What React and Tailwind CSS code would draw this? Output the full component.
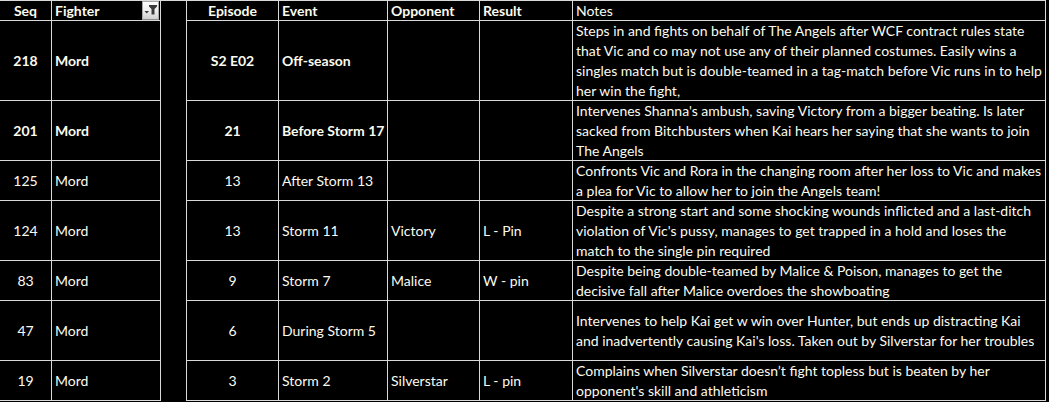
import React from 'react'

const rows = [
  {
    seq: '218', fighter: 'Mord', episode: 'S2 E02', event: 'Off-season', opponent: '', result: '', bold: true, h: 'h-[80px]',
    notes: [
      'Steps in and fights on behalf of The Angels after WCF contract rules state',
      'that Vic and co may not use any of their planned costumes. Easily wins a',
      'singles match but is double-teamed in a tag-match before Vic runs in to help',
      'her win the fight,',
    ],
  },
  {
    seq: '201', fighter: 'Mord', episode: '21', event: 'Before Storm 17', opponent: '', result: '', bold: true, h: 'h-[60px]',
    notes: [
      "Intervenes Shanna's ambush, saving Victory from a bigger beating. Is later",
      'sacked from Bitchbusters when Kai hears her saying that she wants to join',
      'The Angels',
    ],
  },
  {
    seq: '125', fighter: 'Mord', episode: '13', event: 'After Storm 13', opponent: '', result: '', h: 'h-[40px]',
    notes: [
      'Confronts Vic and Rora in the changing room after her loss to Vic and makes',
      'a plea for Vic to allow her to join the Angels team!',
    ],
  },
  {
    seq: '124', fighter: 'Mord', episode: '13', event: 'Storm 11', opponent: 'Victory', result: 'L - Pin', h: 'h-[60px]',
    notes: [
      'Despite a strong start and some shocking wounds inflicted and a last-ditch',
      "violation of Vic's pussy, manages to get trapped in a hold and loses the",
      'match to the single pin required',
    ],
  },
  {
    seq: '83', fighter: 'Mord', episode: '9', event: 'Storm 7', opponent: 'Malice', result: 'W - pin', h: 'h-[40px]',
    notes: [
      'Despite being double-teamed by Malice & Poison, manages to get the',
      'decisive fall after Malice overdoes the showboating',
    ],
  },
  {
    seq: '47', fighter: 'Mord', episode: '6', event: 'During Storm 5', opponent: '', result: '', h: 'h-[60px]',
    notes: [
      'Intervenes to help Kai get w win over Hunter, but ends up distracting Kai',
      "and inadvertently causing Kai's loss. Taken out by Silverstar for her troubles",
    ],
  },
  {
    seq: '19', fighter: 'Mord', episode: '3', event: 'Storm 2', opponent: 'Silverstar', result: 'L - pin', h: 'h-[40px]',
    notes: [
      'Complains when Silverstar doesn\u2019t fight topless but is beaten by her',
      "opponent's skill and athleticism",
    ],
  },
]

const cell = 'flex items-center border-r border-b border-[#d9d9d9] whitespace-nowrap'

// excel-style autofilter button
function FilterButton() {
  return (
    <div className="absolute right-[1px] top-0 h-[19px] w-[17px] border border-[#a8a8a8] border-b-[#8c8c8c] bg-gradient-to-b from-[#fdfdfd] via-[#eeeeee] to-[#cfcfcf]">
      <svg width="15" height="17" viewBox="0 0 15 17">
        <path d="M6 3h8v1.5l-2.5 2.5v5.5h-3v-5.5L6 4.5z" fill="#3a3a3a" />
        <path d="M1.5 9h4.5l-2.25 2.5z" fill="#3a3a3a" />
      </svg>
    </div>
  )
}

export default function App() {
  return (
    <div
      className="w-[1049px] h-[402px] bg-black text-[#fbfbef] text-[14px] leading-[20px] overflow-hidden"
      style={{ fontFamily: 'Lato, "Open Sans", sans-serif' }}
    >
      <div className="w-[1046px] border-t border-[#d9d9d9]">
        {/* Header */}
        <div className="flex h-[20px] font-bold">
          <div className={`${cell} w-[52px] justify-center`}>Seq</div>
          <div className={`${cell} w-[109px] pl-[3px] relative`}>
            Fighter
            <FilterButton />
          </div>
          <div className="w-[26px] border-r border-[#d9d9d9]" />
          <div className={`${cell} w-[92px] justify-center`}>Episode</div>
          <div className={`${cell} w-[109px] pl-[3px]`}>Event</div>
          <div className={`${cell} w-[92px] pl-[3px]`}>Opponent</div>
          <div className={`${cell} w-[93px] pl-[3px]`}>Result</div>
          <div className={`${cell} w-[473px] pl-[3px] font-normal`}>Notes</div>
        </div>

        {/* Rows */}
        {rows.map((r) => (
          <div key={r.seq} className={`flex ${r.h}`}>
            <div className={`${cell} w-[52px] justify-center ${r.bold ? 'font-bold' : ''}`}>{r.seq}</div>
            <div className={`${cell} w-[109px] pl-[3px] ${r.bold ? 'font-bold' : ''}`}>{r.fighter}</div>
            <div className="w-[26px] border-r border-[#d9d9d9]" />
            <div className={`${cell} w-[92px] justify-center ${r.bold ? 'font-bold' : ''}`}>{r.episode}</div>
            <div className={`${cell} w-[109px] pl-[3px] ${r.bold ? 'font-bold' : ''}`}>{r.event}</div>
            <div className={`${cell} w-[92px] pl-[3px]`}>{r.opponent}</div>
            <div className={`${cell} w-[93px] pl-[3px]`}>{r.result}</div>
            <div className={`${cell} w-[473px] pl-[3px]`}>
              <div>
                {r.notes.map((line, i) => (
                  <div key={i}>{line}</div>
                ))}
              </div>
            </div>
          </div>
        ))}
      </div>
    </div>
  )
}
